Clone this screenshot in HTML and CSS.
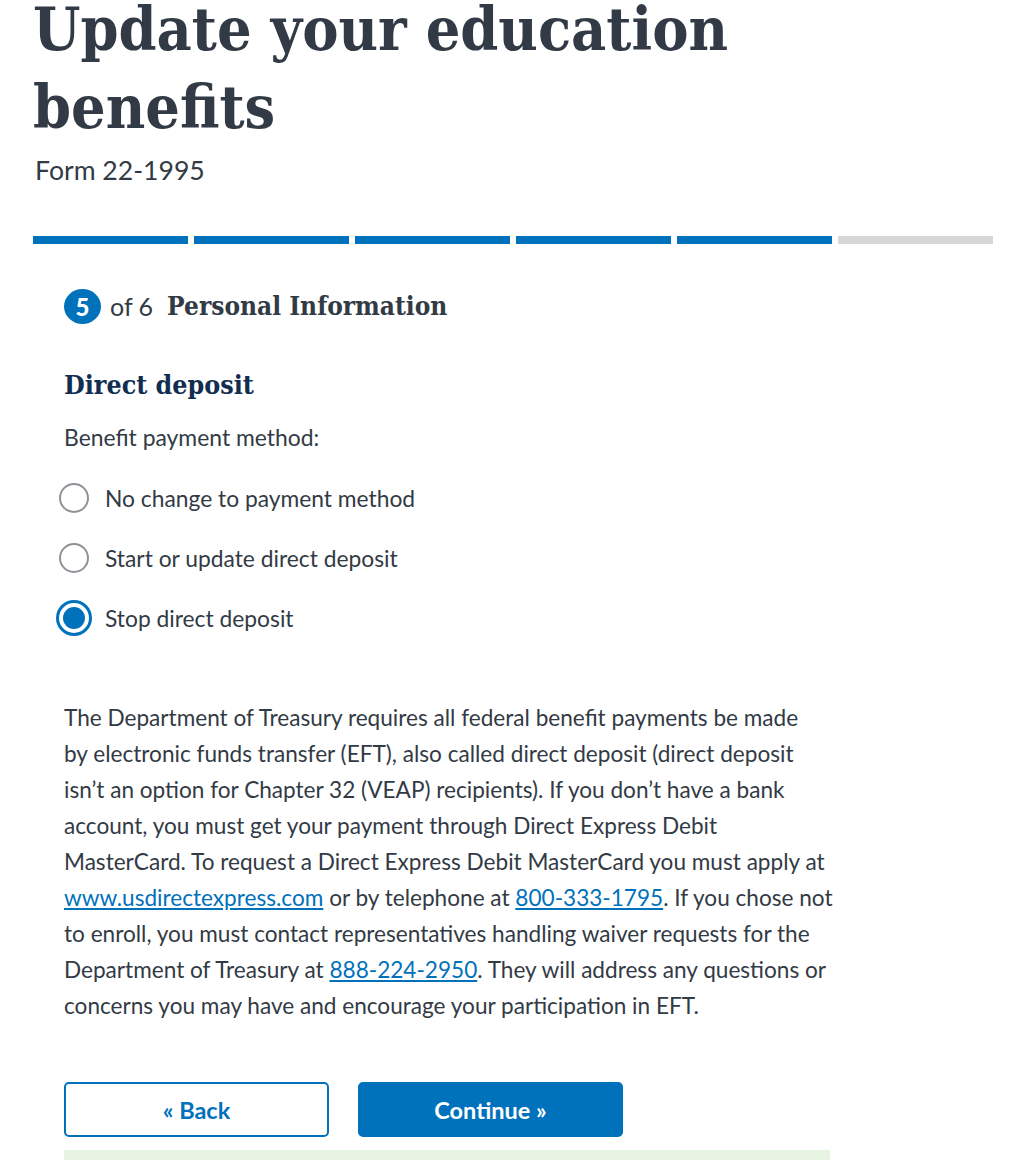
FILE: index.html
```html
<!DOCTYPE html>
<html lang="en">
<head>
<meta charset="utf-8">
<title>Update your education benefits</title>
<link rel="stylesheet" href="styles.css">
</head>
<body>
<header class="page-header">
  <h1 class="title">Update your education benefits</h1>
  <div class="subtitle">Form 22-1995</div>
  <div class="progress">
    <span class="seg done"></span>
    <span class="seg done"></span>
    <span class="seg done"></span>
    <span class="seg done"></span>
    <span class="seg done"></span>
    <span class="seg"></span>
  </div>
</header>
<main class="form">
  <div class="step">
    <span class="step-num">5</span>
    <span class="step-of">of 6</span>
    <span class="step-name">Personal Information</span>
  </div>
  <h2 class="section">Direct deposit</h2>
  <div class="question">Benefit payment method:</div>
  <div class="radios">
    <label class="radio"><span class="dot"></span><span>No change to payment method</span></label>
    <label class="radio"><span class="dot"></span><span>Start or update direct deposit</span></label>
    <label class="radio"><span class="dot checked"></span><span>Stop direct deposit</span></label>
  </div>
  <p class="info">The Department of Treasury requires all federal benefit payments be made<br>
by electronic funds transfer (EFT), also called direct deposit (direct deposit<br>
isn’t an option for Chapter 32 (VEAP) recipients). If you don’t have a bank<br>
account, you must get your payment through Direct Express Debit<br>
MasterCard. To request a Direct Express Debit MasterCard you must apply at<br>
<a href="#">www.usdirectexpress.com</a> or by telephone at <a href="#">800-333-1795</a>. If you chose not<br>
to enroll, you must contact representatives handling waiver requests for the<br>
Department of Treasury at <a href="#">888-224-2950</a>. They will address any questions or<br>
concerns you may have and encourage your participation in EFT.</p>
  <div class="actions">
    <button class="btn btn-outline">« Back</button>
    <button class="btn btn-primary">Continue »</button>
  </div>
  <div class="strip"></div>
</main>
</body>
</html>
```
FILE: styles.css
```css
html, body {
  margin: 0;
  padding: 0;
  background: #ffffff;
}
body {
  font-family: "Lato", "Liberation Sans", sans-serif;
  color: #323a45;
  overflow: hidden;
  height: 1160px;
}
.page-header {
  padding-left: 33px;
  width: 960px;
}
.title {
  font-family: "DejaVu Serif Condensed", "DejaVu Serif", serif;
  font-weight: bold;
  font-size: 60.5px;
  line-height: 78px;
  margin: -10px 0 0 0;
  color: #323a45;
  width: 760px;
}
.subtitle {
  font-size: 26.6px;
  line-height: 34px;
  margin-top: 7px;
  padding-left: 2px;
}
.progress {
  display: flex;
  gap: 6px;
  margin-top: 49px;
}
.seg {
  flex: 1;
  height: 8px;
  background: #d6d7d9;
}
.seg.done {
  background: #0071bb;
}
.form {
  padding-left: 64px;
  width: 766px;
}
.step {
  display: flex;
  align-items: center;
  margin-top: 44px;
  height: 36px;
}
.step-num {
  display: inline-flex;
  align-items: center;
  justify-content: center;
  width: 37px;
  height: 35px;
  border-radius: 50%;
  background: #0071bb;
  color: #fff;
  font-weight: 900;
  font-size: 24px;
}
.step-of {
  font-size: 25px;
  margin-left: 9px;
}
.step-name {
  font-family: "DejaVu Serif Condensed", "DejaVu Serif", serif;
  font-weight: bold;
  font-size: 26px;
  margin-left: 14px;
}
.section {
  font-family: "DejaVu Serif Condensed", "DejaVu Serif", serif;
  font-weight: bold;
  font-size: 26.6px;
  line-height: 36px;
  color: #112e51;
  margin: 43px 0 0 0;
}
.question {
  font-size: 22.9px;
  line-height: 30px;
  margin-top: 19px;
}
.radios {
  display: flex;
  flex-direction: column;
  gap: 24px;
  margin-top: 28px;
}
.radio {
  display: flex;
  align-items: center;
  gap: 16px;
  font-size: 22.8px;
  line-height: 36px;
  margin-left: -5px;
}
.dot {
  width: 26px;
  height: 26px;
  border: 2px solid #8f9297;
  border-radius: 50%;
  box-sizing: content-box;
  flex: none;
}
.dot.checked {
  border: 4px solid #ffffff;
  width: 22px;
  height: 22px;
  background: #0071bb;
  box-shadow: 0 0 0 3px #0071bb;
}
.info {
  font-size: 22.6px;
  line-height: 36px;
  margin: 64px 0 0 0;
  width: 860px;
}
.info a {
  color: #0071bb;
}
.actions {
  display: flex;
  gap: 29px;
  margin-top: 58px;
}
.btn {
  width: 265px;
  height: 55px;
  border-radius: 5px;
  font-family: "Lato", "Liberation Sans", sans-serif;
  font-weight: bold;
  font-size: 23.5px;
  cursor: pointer;
}
.btn-outline {
  background: #ffffff;
  color: #0071bb;
  border: 2px solid #0071bb;
}
.btn-primary {
  background: #0071bb;
  color: #ffffff;
  border: 2px solid #0071bb;
}
.strip {
  margin-top: 13px;
  height: 30px;
  width: 766px;
  background: #e7f4e4;
}
```
